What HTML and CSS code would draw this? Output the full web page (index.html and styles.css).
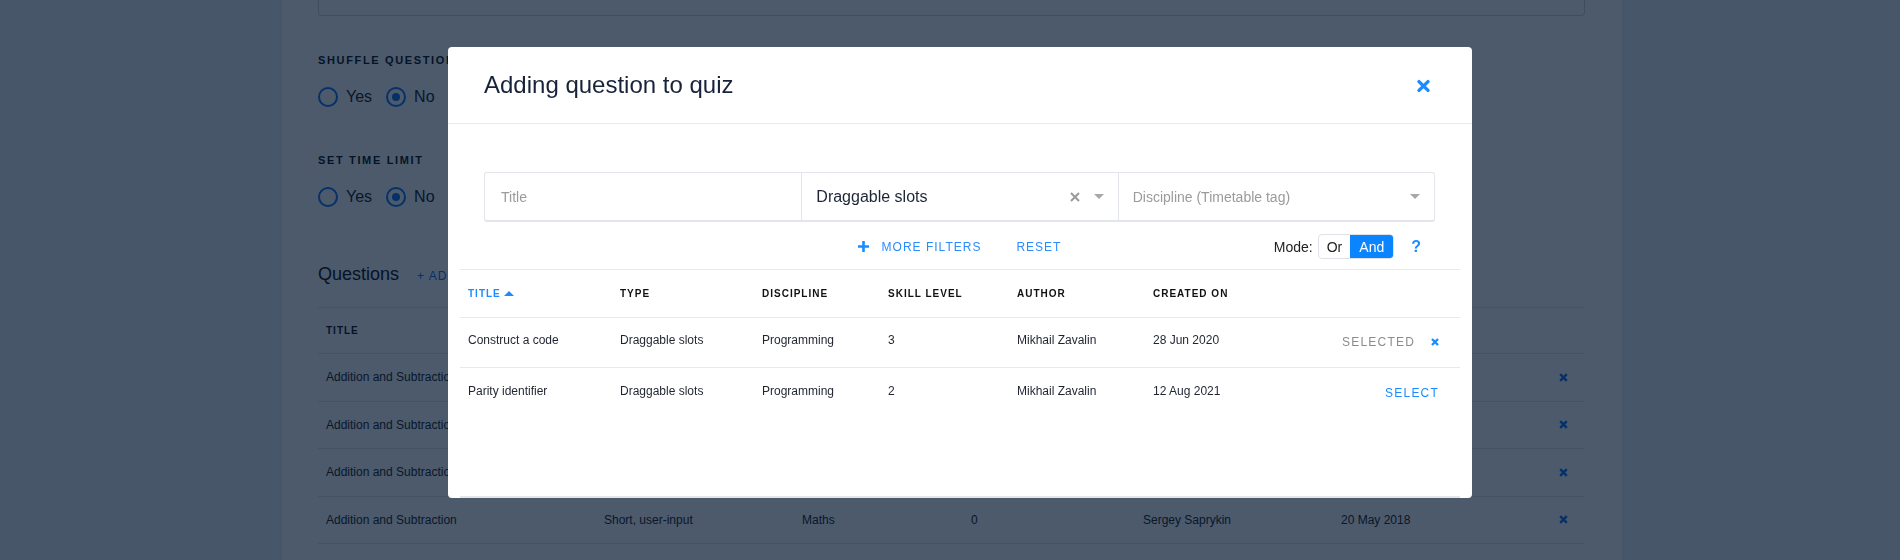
FILE: index.html
```html
<!DOCTYPE html>
<html lang="en">
<head>
<meta charset="utf-8">
<title>Adding question to quiz</title>
<link rel="stylesheet" href="styles.css">
</head>
<body>
<div class="page">
  <main class="card">
    <div class="text-field"></div>

    <section class="field">
      <div class="field-label">Shuffle questions</div>
      <div class="radio-group">
        <label class="radio"><span class="radio-dot"></span>Yes</label>
        <label class="radio"><span class="radio-dot is-checked"></span>No</label>
      </div>
    </section>

    <section class="field field--next">
      <div class="field-label">Set time limit</div>
      <div class="radio-group">
        <label class="radio"><span class="radio-dot"></span>Yes</label>
        <label class="radio"><span class="radio-dot is-checked"></span>No</label>
      </div>
    </section>

    <div class="questions-head">
      <h2 class="questions-title">Questions</h2>
      <a class="link-add">+ Add question</a>
    </div>

    <div class="bg-table">
      <div class="bg-row bg-row--head">
        <div class="bg-cell">Title</div>
        <div class="bg-cell">Type</div>
        <div class="bg-cell">Discipline</div>
        <div class="bg-cell">Skill level</div>
        <div class="bg-cell">Author</div>
        <div class="bg-cell">Created on</div>
        <div class="bg-cell"></div>
      </div>
      <div class="bg-row">
        <div class="bg-cell">Addition and Subtraction</div>
        <div class="bg-cell">Short, user-input</div>
        <div class="bg-cell">Maths</div>
        <div class="bg-cell">0</div>
        <div class="bg-cell">Sergey Saprykin</div>
        <div class="bg-cell">20 May 2018</div>
        <div class="bg-cell bg-cell--act"><svg class="bg-del" viewBox="0 0 9 9"><path d="M1.2 1.2 7.8 7.8M7.8 1.2 1.2 7.8"/></svg></div>
      </div>
      <div class="bg-row">
        <div class="bg-cell">Addition and Subtraction</div>
        <div class="bg-cell">Short, user-input</div>
        <div class="bg-cell">Maths</div>
        <div class="bg-cell">0</div>
        <div class="bg-cell">Sergey Saprykin</div>
        <div class="bg-cell">20 May 2018</div>
        <div class="bg-cell bg-cell--act"><svg class="bg-del" viewBox="0 0 9 9"><path d="M1.2 1.2 7.8 7.8M7.8 1.2 1.2 7.8"/></svg></div>
      </div>
      <div class="bg-row">
        <div class="bg-cell">Addition and Subtraction</div>
        <div class="bg-cell">Short, user-input</div>
        <div class="bg-cell">Maths</div>
        <div class="bg-cell">0</div>
        <div class="bg-cell">Sergey Saprykin</div>
        <div class="bg-cell">20 May 2018</div>
        <div class="bg-cell bg-cell--act"><svg class="bg-del" viewBox="0 0 9 9"><path d="M1.2 1.2 7.8 7.8M7.8 1.2 1.2 7.8"/></svg></div>
      </div>
      <div class="bg-row">
        <div class="bg-cell">Addition and Subtraction</div>
        <div class="bg-cell">Short, user-input</div>
        <div class="bg-cell">Maths</div>
        <div class="bg-cell">0</div>
        <div class="bg-cell">Sergey Saprykin</div>
        <div class="bg-cell">20 May 2018</div>
        <div class="bg-cell bg-cell--act"><svg class="bg-del" viewBox="0 0 9 9"><path d="M1.2 1.2 7.8 7.8M7.8 1.2 1.2 7.8"/></svg></div>
      </div>
    </div>
  </main>
</div>

<div class="overlay"></div>

<div class="modal" role="dialog">
  <header class="modal-header">
    <h1 class="modal-title">Adding question to quiz</h1>
    <button class="modal-close" type="button" aria-label="Close">
      <svg viewBox="0 0 13 12" width="13" height="12"><path d="M2 1.6 11 10.4M11 1.6 2 10.4"/></svg>
    </button>
  </header>

  <div class="modal-body">
    <div class="filters">
      <div class="filter-box">
        <div class="filter-seg filter-seg--first"><span class="placeholder">Title</span></div>
        <div class="filter-seg filter-seg--second">
          <span class="value">Draggable slots</span>
          <span class="seg-icons">
            <svg class="clear-icon" viewBox="0 0 10 10" width="10" height="10"><path d="M1 1 9 9M9 1 1 9"/></svg>
            <svg class="caret" viewBox="0 0 10 5" width="10" height="5"><path d="M0 0h10L5 5z"/></svg>
          </span>
        </div>
        <div class="filter-seg filter-seg--third">
          <span class="placeholder">Discipline (Timetable tag)</span>
          <svg class="caret" viewBox="0 0 10 5" width="10" height="5"><path d="M0 0h10L5 5z"/></svg>
        </div>
      </div>

      <div class="toolbar">
        <div></div>
        <div class="toolbar-center">
          <a class="tool-link tool-link--more">
            <svg class="plus-icon" viewBox="0 0 11 11" width="11" height="11"><path d="M5.5 0v11M0 5.5h11"/></svg>
            More filters
          </a>
          <a class="tool-link tool-link--reset">Reset</a>
        </div>
        <div class="toolbar-right">
          <span class="mode-label">Mode:</span>
          <div class="toggle">
            <span class="toggle-opt">Or</span>
            <span class="toggle-opt is-active">And</span>
          </div>
          <span class="help">?</span>
        </div>
      </div>
    </div>

    <div class="q-table">
      <div class="q-row q-row--head">
        <div class="q-cell q-cell--sorted">Title
          <svg class="sort-icon" viewBox="0 0 10 5" width="10" height="5"><path d="M0 5h10L5 0z"/></svg>
        </div>
        <div class="q-cell">Type</div>
        <div class="q-cell">Discipline</div>
        <div class="q-cell">Skill level</div>
        <div class="q-cell">Author</div>
        <div class="q-cell">Created on</div>
        <div class="q-cell"></div>
      </div>
      <div class="q-row q-row--line">
        <div class="q-cell">Construct a code</div>
        <div class="q-cell">Draggable slots</div>
        <div class="q-cell">Programming</div>
        <div class="q-cell">3</div>
        <div class="q-cell">Mikhail Zavalin</div>
        <div class="q-cell">28 Jun 2020</div>
        <div class="q-cell q-cell--act">
          <span class="state-selected">Selected</span>
          <svg class="unselect-icon" viewBox="0 0 8 8" width="8" height="8"><path d="M1 1 7 7M7 1 1 7"/></svg>
        </div>
      </div>
      <div class="q-row">
        <div class="q-cell">Parity identifier</div>
        <div class="q-cell">Draggable slots</div>
        <div class="q-cell">Programming</div>
        <div class="q-cell">2</div>
        <div class="q-cell">Mikhail Zavalin</div>
        <div class="q-cell">12 Aug 2021</div>
        <div class="q-cell q-cell--act">
          <a class="action-select">Select</a>
        </div>
      </div>
    </div>
  </div>
</div>
</body>
</html>
```

FILE: styles.css
```css
* { box-sizing: border-box; }

html, body {
  margin: 0;
  height: 560px;
  overflow: hidden;
}

body {
  background: #eef0f3;
  font-family: "Liberation Sans", Arial, sans-serif;
  color: #222;
}

/* ---------- underlying page ---------- */
.page {
  padding-left: 4px;
}

.card {
  width: 1340px;
  height: 560px;
  margin: 0 auto;
  background: #ffffff;
  padding: 0 37px 0 36px;
}

.text-field {
  height: 16px;
  border: 1px solid #cfd4da;
  border-top: 0;
  border-radius: 0 0 4px 4px;
}

.field-label {
  margin-top: 37px;
  font-size: 11px;
  line-height: 14px;
  font-weight: 700;
  letter-spacing: 1.65px;
  text-transform: uppercase;
  color: #111;
}

.field--next .field-label {
  margin-top: 46px;
}

.radio-group {
  display: flex;
  gap: 14px;
  margin-top: 20px;
  height: 20px;
}

.radio {
  display: flex;
  align-items: center;
  gap: 8px;
  font-size: 16px;
  line-height: 20px;
  color: #222;
}

.radio-dot {
  width: 20px;
  height: 20px;
  border: 2px solid #1672f0;
  border-radius: 50%;
  display: flex;
  align-items: center;
  justify-content: center;
}

.radio-dot.is-checked::after {
  content: "";
  width: 8px;
  height: 8px;
  border-radius: 50%;
  background: #1672f0;
}

.questions-head {
  display: flex;
  align-items: baseline;
  gap: 18px;
  margin-top: 55px;
}

.questions-title {
  margin: 0;
  font-size: 18px;
  line-height: 24px;
  font-weight: 400;
  color: #111;
}

.link-add {
  font-size: 12px;
  letter-spacing: 1px;
  text-transform: uppercase;
  color: #1672f0;
}

.bg-table {
  margin-top: 21px;
  border-top: 1px solid #e3e5e8;
}

.bg-row {
  display: grid;
  grid-template-columns: 278px 198px 169px 172px 198px 1fr 60px;
  align-items: center;
  height: 47.5px;
  border-bottom: 1px solid #e3e5e8;
  font-size: 12px;
  color: #222;
}

.bg-row--head {
  height: 46px;
  font-size: 10px;
  font-weight: 700;
  letter-spacing: 1px;
  text-transform: uppercase;
  color: #111;
}

.bg-cell {
  padding-left: 8px;
  white-space: nowrap;
}

.bg-cell--act {
  display: flex;
  justify-content: flex-end;
  padding-right: 17px;
}

.bg-del {
  width: 9px;
  height: 9px;
  fill: none;
  stroke: #1672f0;
  stroke-width: 2.4;
}

/* ---------- overlay ---------- */
.overlay {
  position: fixed;
  inset: 0;
  background: rgba(0, 20, 45, 0.7);
}

/* ---------- modal ---------- */
.modal {
  position: absolute;
  left: 448px;
  top: 47px;
  width: 1024px;
  height: 451px;
  background: #ffffff;
  border-radius: 4px;
  overflow: hidden;
  display: flex;
  flex-direction: column;
}

.modal-header {
  flex: none;
  height: 77px;
  border-bottom: 1px solid #e8eaed;
  display: flex;
  align-items: center;
  justify-content: space-between;
  padding: 0 42px 0 36px;
}

.modal-title {
  margin: 0;
  font-size: 24px;
  line-height: 28px;
  font-weight: 400;
  color: #17233a;
}

.modal-close {
  padding: 0;
  margin-top: 2px;
  border: 0;
  background: none;
  display: flex;
}

.modal-close svg {
  overflow: visible;
  fill: none;
  stroke: #1a8cff;
  stroke-width: 3.4;
  stroke-linecap: round;
}

.modal-body {
  flex: 1;
  display: flex;
  flex-direction: column;
  padding: 48px 12px 0;
}

.filters {
  padding: 0 25px 0 24px;
}

.filter-box {
  display: grid;
  grid-template-columns: repeat(3, 1fr);
  height: 50px;
  border: 1px solid #e2e5e9;
  border-bottom-width: 2px;
  border-radius: 3px;
}

.filter-seg {
  display: flex;
  align-items: center;
  justify-content: space-between;
  min-width: 0;
}

.filter-seg--first {
  padding-left: 16px;
}

.filter-seg--second {
  border-left: 1px solid #e2e5e9;
  padding: 0 14px;
}

.filter-seg--third {
  border-left: 1px solid #e2e5e9;
  padding: 0 14px;
}

.placeholder {
  font-size: 14px;
  color: #9b9b9b;
}

.value {
  font-size: 16px;
  color: #1d2536;
}

.seg-icons {
  display: flex;
  align-items: center;
  gap: 14px;
}

.clear-icon {
  fill: none;
  stroke: #9a9a9a;
  stroke-width: 2;
}

.caret {
  fill: #a8a8a8;
}

.toolbar {
  display: grid;
  grid-template-columns: 1fr auto 1fr;
  align-items: center;
  height: 25px;
  margin-top: 12px;
}

.toolbar-center {
  display: flex;
  align-items: center;
}

.tool-link {
  display: flex;
  align-items: center;
  font-size: 12px;
  letter-spacing: 1px;
  text-transform: uppercase;
  color: #2a8cff;
}

.plus-icon {
  margin-right: 13px;
  fill: none;
  stroke: #1a8cff;
  stroke-width: 2.6;
}

.tool-link--reset {
  margin-left: 35px;
}

.toolbar-right {
  justify-self: end;
  display: flex;
  align-items: center;
  padding-right: 14px;
}

.mode-label {
  font-size: 14px;
  color: #222;
  margin-right: 5px;
}

.toggle {
  display: flex;
  height: 25px;
  border: 1px solid #dfe2e6;
  border-radius: 4px;
  overflow: hidden;
}

.toggle-opt {
  display: flex;
  align-items: center;
  padding: 0 8px;
  font-size: 14px;
  color: #222;
}

.toggle-opt.is-active {
  padding: 0 9px;
  background: #0a84ff;
  color: #ffffff;
}

.help {
  margin-left: 17px;
  font-size: 16px;
  font-weight: 700;
  color: #1a8cff;
}

/* ---------- modal table ---------- */
.q-table {
  flex: 1;
  margin-top: 10px;
  border-top: 1px solid #e8e9ec;
  border-bottom: 2px solid #e4e6e9;
}

.q-row {
  display: grid;
  grid-template-columns: 152px 142px 126px 129px 136px 1fr auto;
  align-items: center;
  height: 50px;
  padding-bottom: 5px;
  font-size: 12px;
  color: #1f2430;
}

.q-row--line {
  border-bottom: 1px solid #e8e9ec;
}

.q-row--head {
  height: 48px;
  padding-bottom: 0;
  border-bottom: 1px solid #e8e9ec;
  font-size: 10px;
  font-weight: 700;
  letter-spacing: 1px;
  text-transform: uppercase;
  color: #111;
}

.q-cell {
  padding-left: 8px;
  white-space: nowrap;
}

.q-cell--sorted {
  display: flex;
  align-items: center;
  color: #1a8cff;
}

.sort-icon {
  margin-left: 3px;
  margin-bottom: 1px;
  fill: #1a8cff;
}

.q-cell--act {
  display: flex;
  align-items: center;
  justify-content: flex-end;
  padding-top: 4px;
  padding-right: 21px;
}

.state-selected {
  font-size: 12px;
  letter-spacing: 1.2px;
  text-transform: uppercase;
  color: #8c8c8c;
}

.unselect-icon {
  margin-left: 16px;
  fill: none;
  stroke: #1a8cff;
  stroke-width: 2.4;
}

.action-select {
  font-size: 12px;
  letter-spacing: 1.2px;
  text-transform: uppercase;
  color: #1a8cff;
}
```
